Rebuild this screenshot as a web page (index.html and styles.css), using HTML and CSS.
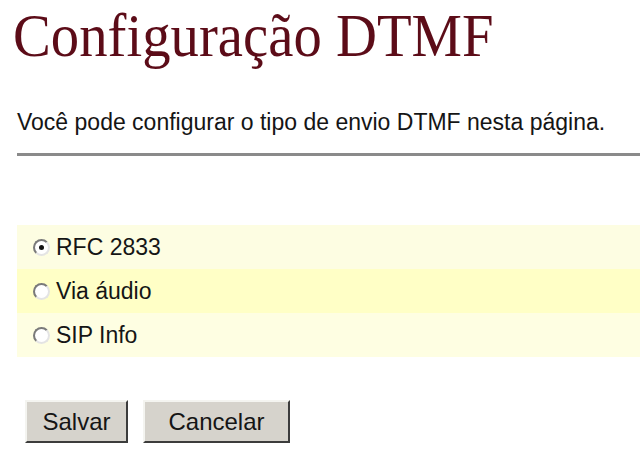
FILE: index.html
```html
<!DOCTYPE html>
<html lang="pt-br">
<head>
    <meta charset="UTF-8">
    <title>Configuração DTMF</title>
    <link rel="stylesheet" href="styles.css">
</head>
<body>
    <div class="page">
        <h1 class="title">Configuração DTMF</h1>
        <p class="intro">Você pode configurar o tipo de envio DTMF nesta página.</p>
        <hr class="rule">

        <form class="dtmf-form">
            <div class="options">
                <label class="option option-1">
                    <input type="radio" name="dtmf" value="rfc2833" checked>
                    <span>RFC 2833</span>
                </label>
                <label class="option option-2">
                    <input type="radio" name="dtmf" value="audio">
                    <span>Via áudio</span>
                </label>
                <label class="option option-3">
                    <input type="radio" name="dtmf" value="sipinfo">
                    <span>SIP Info</span>
                </label>
            </div>

            <div class="actions">
                <button type="submit" class="btn btn-save">Salvar</button>
                <button type="reset" class="btn btn-cancel">Cancelar</button>
            </div>
        </form>
    </div>
</body>
</html>
```

FILE: styles.css
```css
* {
    margin: 0;
    padding: 0;
    box-sizing: border-box;
}

body {
    background: #ffffff;
    font-family: 'Liberation Sans', Arial, sans-serif;
    color: #111111;
    overflow: hidden;
}

.page {
    padding: 4px 0 0 17px;
}

.title {
    display: inline-block;
    font-family: 'Liberation Serif', 'Times New Roman', serif;
    font-weight: normal;
    font-size: 61px;
    line-height: 64px;
    color: #5c0c18;
    margin-left: -4px;
    transform: scaleX(0.93);
    transform-origin: left center;
}

.intro {
    font-size: 23px;
    line-height: 28px;
    margin-top: 40px;
    color: #151515;
}

.rule {
    border: none;
    height: 3px;
    background: #8a8a8a;
    margin-top: 17px;
}

/* Opções */
.options {
    margin-top: 69px;
}

.option {
    display: flex;
    align-items: center;
    height: 44px;
    padding-left: 16px;
    font-size: 23px;
    color: #151515;
}

.option-1 {
    background: #fdfde2;
}

.option-2 {
    background: #ffffc6;
}

.option-3 {
    background: #fefee2;
}

.option input {
    appearance: none;
    width: 17px;
    height: 17px;
    border-radius: 50%;
    border: 2px solid #7a7a7a;
    border-right-color: #e4e4e4;
    border-bottom-color: #e4e4e4;
    background: #ffffff;
    margin-right: 6px;
    position: relative;
}

.option input:checked::after {
    content: "";
    position: absolute;
    width: 5px;
    height: 5px;
    border-radius: 50%;
    background: #111111;
    left: 4px;
    top: 4px;
}

/* Botões */
.actions {
    display: flex;
    gap: 15px;
    margin-top: 43px;
    padding-left: 8px;
}

.btn {
    height: 43px;
    font-family: 'Liberation Sans', Arial, sans-serif;
    font-size: 24px;
    color: #151515;
    background: #d6d3cc;
    border: 2px solid;
    border-color: #f4f4f0 #3c3c3c #3c3c3c #f4f4f0;
}

.btn-save {
    width: 103px;
}

.btn-cancel {
    width: 147px;
}
```
